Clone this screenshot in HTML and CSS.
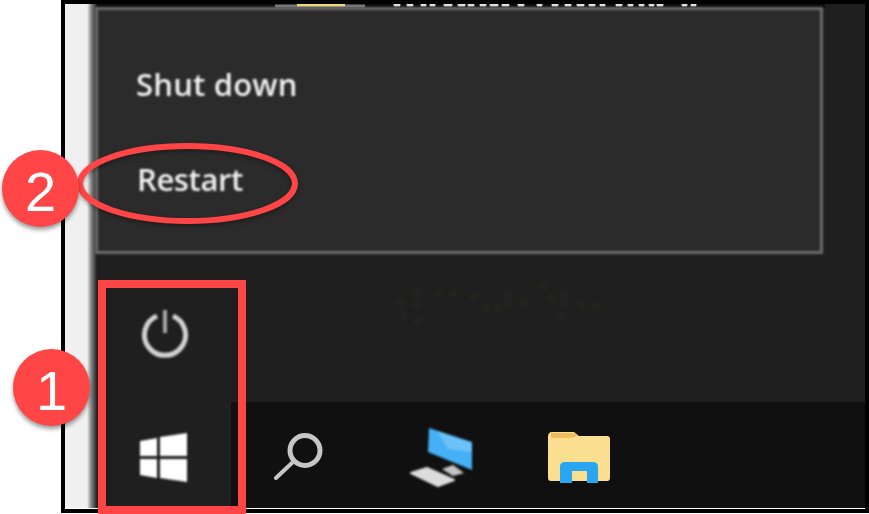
FILE: index.html
```html
<!DOCTYPE html>
<html lang="en">
<head>
    <meta charset="UTF-8">
    <title>Restart from the Start menu</title>
    <link rel="stylesheet" href="styles.css">
</head>
<body>

<div class="frame">
    <div class="screen">
        <div class="edge"></div>

        <div class="desktop">
            <!-- cut off tiles above the flyout -->
            <svg class="tile-strip" width="768" height="4" viewBox="97 4 768 4">
                <path d="M275 6H365" stroke="#7a7a7a" stroke-width="3"/>
                <path d="M297 5H345" stroke="#f4dc78" stroke-width="3"/>
                <path class="tile-dots" d="M395 5h4M408 5h4M422 5h3M431 5h3M445 5h6M459 5h5M469 5h4M481 5h4M491 5h6M503 5h5M519 5h4M538 5h3M553 5h4M566 5h4M578 5h5M590 5h4M601 5h3M617 5h4M629 5h3M640 5h3M650 5h3M658 5h4M683 5h3M692 5h3"/>
            </svg>

            <div class="flyout">
                <div class="flyout-item">Shut down</div>
                <div class="flyout-item flyout-item-tight">Restart</div>
            </div>

            <!-- very faint smudge left over from the original capture -->
            <svg class="smudge" width="240" height="70" viewBox="380 270 240 70">
                <path d="M400 303h1M417 292h1M416 304h1M403 316h1M417 321h1M438 294h1M453 294h1M473 297h1M485 308h1M498 308h1M508 295h1M509 304h1M524 303h1M542 286h1M551 298h1M564 294h1M563 304h1M561 317h1M581 305h1M595 306h1"/>
            </svg>

            <div class="bottom-row">
                <div class="start-col">
                    <svg class="icon-power" width="50" height="54" viewBox="140 308 50 54">
                        <path d="M157 316A20.5 20.5 0 1 0 173 316" fill="none" stroke="#d2d2d2" stroke-width="5"/>
                        <path d="M165 310V333" stroke="#a8a8a8" stroke-width="4"/>
                    </svg>
                    <svg class="icon-win" width="48" height="50" viewBox="138 433 48 50">
                        <path d="M139 441L156 438V456H139Z M159 437L186 433V456H159Z M139 459H156V478L139 475Z M159 459H186V482L159 478Z" fill="#fff"/>
                    </svg>
                </div>
                <div class="taskbar">
                    <svg class="icon-search" width="52" height="54" viewBox="272 430 52 54">
                        <circle cx="305" cy="450.5" r="15" fill="none" stroke="#c6c6c6" stroke-width="5"/>
                        <path d="M294 461L276 478" stroke="#c6c6c6" stroke-width="4" stroke-linecap="round"/>
                    </svg>
                    <svg class="icon-pc" width="68" height="64" viewBox="408 426 68 64">
                        <path d="M429 428L472 442V470L428 452Z" fill="#45b0f5"/>
                        <path d="M437 431L472 443V452L448 449Z" fill="#6cc2f8"/>
                        <path d="M442 469L453 465L464 473L453 476Z" fill="#c4c4c4"/>
                        <path d="M411 473L427 468L454 480L438 486Z" fill="#dcdcdc" stroke="#dcdcdc" stroke-width="2" stroke-linejoin="round"/>
                    </svg>
                    <svg class="icon-folder" width="64" height="54" viewBox="547 431 64 54">
                        <path d="M548 437Q548 432 552 432H574L579 436H607Q610 436 610 439V478Q610 481 607 481H551Q548 481 548 478Z" fill="#fbdf90"/>
                        <path d="M551 433H574L578 436L570 438H551Z" fill="#edbf5c"/>
                        <path d="M560 483V467Q560 462 565 462H593Q598 462 598 467V483H587V471H572V483Z" fill="#2aa5ef"/>
                    </svg>
                </div>
            </div>
        </div>
    </div>
</div>

<!-- callouts drawn on top of the screenshot -->
<div class="callout-box"></div>
<svg class="callout-ring" width="225" height="85" viewBox="75 141 225 85">
    <ellipse cx="187.5" cy="183.5" rx="107.5" ry="37.5" fill="none" stroke="#ff4545" stroke-width="6"/>
</svg>
<div class="badge badge-two">2</div>
<div class="badge badge-one">1</div>

</body>
</html>
```

FILE: styles.css
```css
html, body {
    margin: 0;
    padding: 0;
    height: 514px;
    overflow: hidden;
    background-color: #fff;
}

body {
    position: relative;
    font-family: "Open Sans", "Liberation Sans", sans-serif;
}

svg {
    display: block;
}

.frame {
    box-sizing: border-box;
    width: 808px;
    height: 513px;
    margin-left: 61px;
    border: 4px solid #000;
}

.screen {
    display: flex;
    height: 504px;
    border-bottom: 1px solid #fff;
    background-color: #1f1f1f;
}

.edge {
    width: 32px;
    flex-shrink: 0;
    background: linear-gradient(90deg, #f0f0f0 0, #f0f0f0 22px, #8a8a8a 26px, #1f1f1f 32px);
}

.desktop {
    position: relative;
    flex: 1;
    display: flex;
    flex-direction: column;
    min-width: 0;
}

.tile-strip {
    flex-shrink: 0;
    background: linear-gradient(90deg, #0c0c0c 728px, #1f1f1f 728px);
    filter: blur(0.6px);
}

.tile-dots {
    stroke: #e4e4e4;
    stroke-width: 3;
    stroke-linecap: round;
}

/* flyout, everything soft like the upscaled capture */
.flyout {
    box-sizing: border-box;
    width: 728px;
    height: 247px;
    margin-left: -2px;
    margin-top: -1px;
    padding: 52px 0 0 38px;
    border: 3px solid #6c6c6c;
    background-color: #2b2b2b;
    color: #f0f0f0;
    font-size: 31px;
    font-weight: 600;
    filter: blur(0.8px);
}

.flyout-item {
    height: 95px;
    line-height: 44px;
    letter-spacing: 0.2px;
}

.flyout-item-tight {
    letter-spacing: -0.4px;
    padding-left: 1px;
}

.smudge {
    position: absolute;
    left: 283px;
    top: 266px;
    stroke: #26261f;
    stroke-width: 6;
    stroke-linecap: round;
    filter: blur(2px);
}

.bottom-row {
    flex: 1;
    display: flex;
    align-items: flex-end;
}

.start-col {
    width: 134px;
    flex-shrink: 0;
    padding: 0 0 25px 42px;
    box-sizing: border-box;
}

.icon-power {
    margin-bottom: 71px;
    margin-left: 1px;
    filter: blur(0.8px);
}

.icon-win {
    filter: blur(0.8px);
}

.taskbar {
    flex: 1;
    height: 106px;
    display: flex;
    align-items: flex-start;
    background-color: #101010;
}

.icon-search {
    margin: 28px 0 0 41px;
    filter: blur(0.6px);
}

.icon-pc {
    margin: 24px 0 0 84px;
    filter: blur(0.8px);
}

.icon-folder {
    margin: 29px 0 0 71px;
    filter: blur(0.7px);
}

.callout-box {
    position: absolute;
    left: 98px;
    top: 280px;
    box-sizing: border-box;
    width: 148px;
    height: 234px;
    border: 8px solid #ff4545;
}

.callout-ring {
    position: absolute;
    left: 75px;
    top: 141px;
    filter: drop-shadow(0 2px 2px rgba(0, 0, 0, 0.35));
}

.badge {
    position: absolute;
    width: 77px;
    height: 77px;
    border-radius: 50%;
    background-color: #ff4545;
    color: #fff;
    font-family: "Liberation Sans", Arial, sans-serif;
    font-size: 56px;
    line-height: 84px;
    text-align: center;
    box-shadow: 0 3px 4px rgba(0, 0, 0, 0.4);
}

.badge-two {
    left: 2px;
    top: 150px;
}

.badge-one {
    left: 13px;
    top: 349px;
}
```
